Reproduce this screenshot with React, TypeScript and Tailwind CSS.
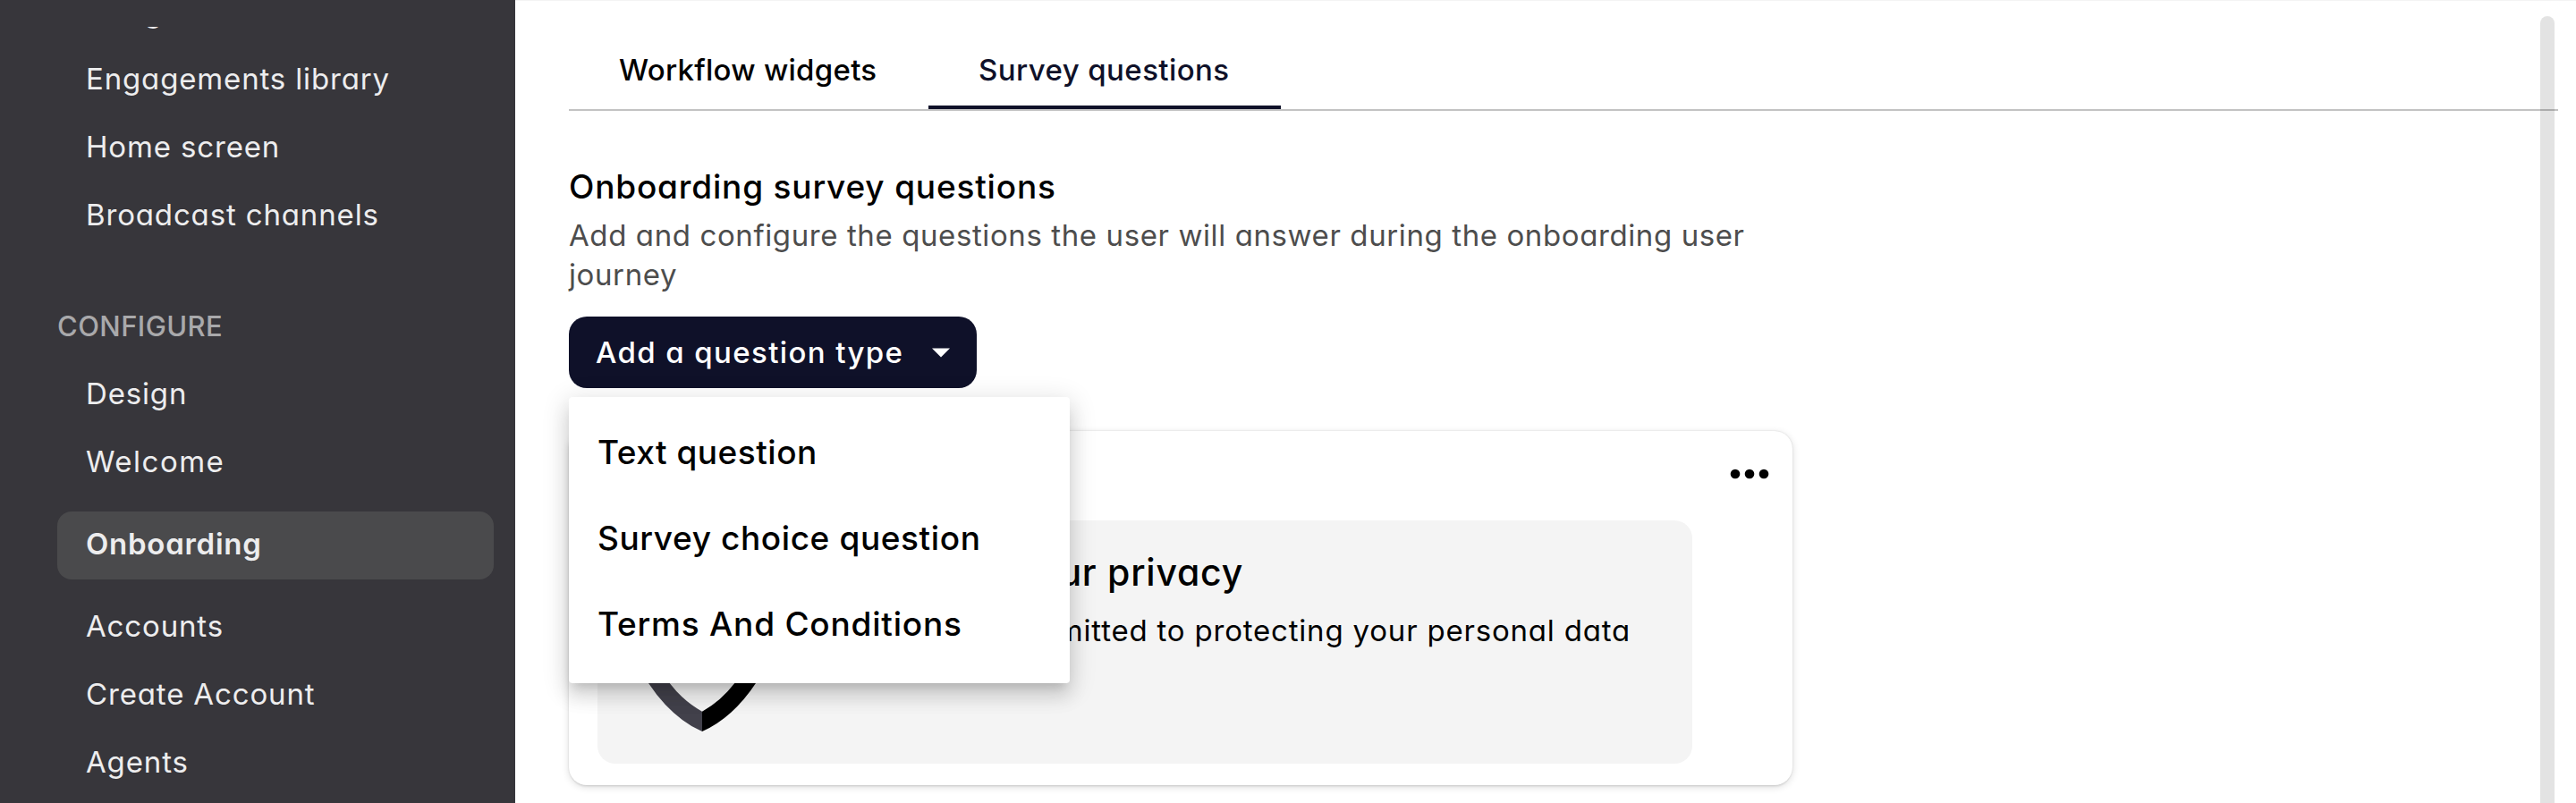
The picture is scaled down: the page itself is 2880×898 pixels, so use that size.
type NavItem = { label: string; active?: boolean; spacing?: string };

const MANAGE_ITEMS: NavItem[] = [
  { label: "Engagements library" },
  { label: "Home screen" },
  { label: "Broadcast channels" },
];

const CONFIGURE_ITEMS: NavItem[] = [
  { label: "Design" },
  { label: "Welcome", spacing: "tracking-[1.5px]" },
  { label: "Onboarding", active: true },
  { label: "Accounts" },
  { label: "Create Account" },
  { label: "Agents" },
];

const MENU_ITEMS = [
  { label: "Text question", spacing: "tracking-[0.5px]" },
  { label: "Survey choice question", spacing: "tracking-[0.6px]" },
  { label: "Terms And Conditions", spacing: "tracking-[0.78px]" },
];

function NavRow({ label, active, spacing }: NavItem) {
  if (active) {
    return (
      <a className="my-4 flex h-[76px] shrink-0 items-center rounded-2xl bg-[#4a4a4c] pb-[2px] pl-8 font-semibold tracking-[0.73px]">
        {label}
      </a>
    );
  }
  return (
    <a className={`flex h-[76px] shrink-0 items-center pb-[2px] pl-8 ${spacing ?? "tracking-[0.85px]"}`}>
      {label}
    </a>
  );
}

function Sidebar() {
  return (
    <aside className="h-full w-[576px] shrink-0 bg-[#37363b] pt-[30px]">
      <nav className="flex h-full flex-col overflow-hidden pr-6 pl-16 text-[33px] text-[#ededee]">
        <a className="-mt-[54px] flex h-[76px] shrink-0 items-center pl-8 tracking-[1.4px]">Widgets</a>
        {MANAGE_ITEMS.map((item) => (
          <NavRow key={item.label} {...item} />
        ))}
        <div className="mt-12 flex h-[76px] shrink-0 items-center pb-[1px] text-[31px] font-medium tracking-[0.4px] text-[#a9a9ab]">
          CONFIGURE
        </div>
        {CONFIGURE_ITEMS.map((item) => (
          <NavRow key={item.label} {...item} />
        ))}
      </nav>
    </aside>
  );
}

function Tabs() {
  return (
    <div className="mt-[33px] flex w-[2224px] border-b-2 border-black/24 text-[33px] font-medium">
      <button className="flex h-[88px] w-[402px] items-center border-b-4 border-transparent pt-1.5 pl-14 tracking-[0.27px]">
        Workflow widgets
      </button>
      <button className="flex h-[88px] w-[394px] items-center border-b-4 border-[#0f1129] pt-1.5 pl-14 tracking-[0.42px] text-[#0f1129]">
        Survey questions
      </button>
    </div>
  );
}

function QuestionMenu() {
  return (
    <div className="relative w-[456px]">
      <button className="flex h-20 w-full items-center rounded-[20px] bg-[#0f1129] pl-[30px] text-[33px] font-medium text-white">
        <span className="w-[376px] pt-px text-left tracking-[1.38px]">Add a question type</span>
        <svg width="20" height="11" viewBox="0 0 20 11" fill="currentColor">
          <path d="M0 0.5h20L10 10.5z" />
        </svg>
      </button>
      <ul className="absolute top-[90px] left-0 z-10 w-[560px] rounded bg-white py-4 text-[37px] font-medium shadow-[0_10px_10px_-6px_rgba(0,0,0,0.13),0_16px_20px_2px_rgba(0,0,0,0.08),0_6px_28px_4px_rgba(0,0,0,0.12)]">
        {MENU_ITEMS.map((item) => (
          <li key={item.label} className={`flex h-24 items-center pb-[4px] pl-8 ${item.spacing}`}>
            {item.label}
          </li>
        ))}
      </ul>
    </div>
  );
}

function PrivacyCard() {
  return (
    <section className="mt-12 flex h-[396px] w-[1368px] flex-col rounded-[20px] bg-white pl-8 shadow-[0_4px_2px_-2px_rgba(0,0,0,0.06),0_0_2px_0_rgba(0,0,0,0.14),0_2px_8px_0_rgba(0,0,0,0.14)]">
      <div className="flex h-[100px] shrink-0 justify-end pt-4 pr-4">
        <svg width="64" height="64" viewBox="0 0 24 24">
          <circle cx="6" cy="12" r="2" />
          <circle cx="12" cy="12" r="2" />
          <circle cx="18" cy="12" r="2" />
        </svg>
      </div>
      <div className="flex h-[272px] w-[1224px] rounded-[20px] bg-[#f4f4f4] pl-[37px]">
        <svg className="mt-20 shrink-0" width="160" height="160" viewBox="705 662 160 160">
          <path
            d="M785 818Q751 803 725 764Q707 736 707 700L785 666V690L727 716Q730 742 748.7 764Q764 784 785 795.7z"
            fill="#42414b"
          />
          <path d="M785 818Q819 803 845 764Q863 736 863 700L785 666V690L843 716Q840 742 821.3 764Q806 784 785 795.7z" />
        </svg>
        <div className="flex flex-col items-start whitespace-nowrap pt-7">
          <h3 className="flex w-[525px] justify-end text-[41px] leading-[60px] font-medium tracking-[0.75px]">
            We protect your privacy
          </h3>
          <p className="mt-[11px] flex w-[958px] justify-end text-[33px] leading-[48px] tracking-[0.8px]">
            We are fully committed to protecting your personal data
          </p>
        </div>
      </div>
    </section>
  );
}

export default function App() {
  return (
    <div className="relative flex h-[898px] w-[2880px] overflow-hidden bg-white font-[Inter,sans-serif] text-black [font-feature-settings:'cv11']">
      <Sidebar />
      <main className="flex grow flex-col border-t border-[#f4f4f4] pl-[60px]">
        <Tabs />
        <h2 className="mt-[58px] text-[37px] leading-[54px] font-medium tracking-[0.82px]">
          Onboarding survey questions
        </h2>
        <p className="mt-[5px] mb-[25px] w-[1368px] text-[33px] leading-[44px] tracking-[0.6px] text-[#4d4d4d]">
          Add and configure the questions the user will answer during the onboarding user journey
        </p>
        <QuestionMenu />
        <PrivacyCard />
      </main>
      <div className="absolute top-[18px] right-6 h-[1200px] w-4 rounded-full bg-black/11" />
    </div>
  );
}
